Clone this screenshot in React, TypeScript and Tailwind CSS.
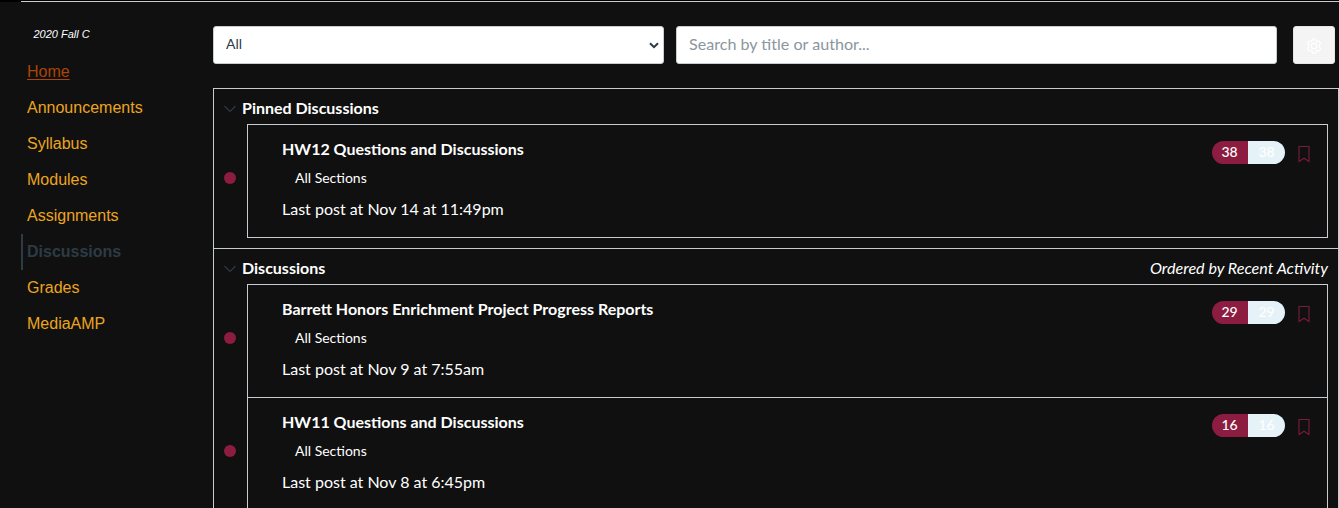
type Topic = { title: string; date: string; unread: number; total: number };

const navItems = ['Home', 'Announcements', 'Syllabus', 'Modules', 'Assignments', 'Discussions', 'Grades', 'MediaAMP'];

const pinned: Topic[] = [
  { title: 'HW12 Questions and Discussions', date: 'Last post at Nov 14 at 11:49pm', unread: 38, total: 38 },
];

const recent: Topic[] = [
  { title: 'Barrett Honors Enrichment Project Progress Reports', date: 'Last post at Nov 9 at 7:55am', unread: 29, total: 29 },
  { title: 'HW11 Questions and Discussions', date: 'Last post at Nov 8 at 6:45pm', unread: 16, total: 16 },
];

function navClass(name: string) {
  const base = 'flex h-9 items-center border-l-2 pl-1 text-[16px] leading-none';
  if (name === 'Home') return `${base} border-transparent text-[#ab4405] underline underline-offset-2`;
  if (name === 'Discussions') return `${base} border-[#2d3b45] font-bold text-[#2d3b45]`;
  return `${base} border-transparent text-[#eba51f]`;
}

function TopicRow({ topic }: { topic: Topic }) {
  return (
    <li className="flex h-[113px]">
      <div className="flex w-[33px] shrink-0 items-center pb-[5px] pl-2.5">
        <span className="size-3 rounded-full bg-[#8c1d40]" />
      </div>
      <div className="mr-2.5 flex grow border-x border-t border-[#c7cdd1] pl-[34px]">
        <div className="grow pt-3">
          <h3 className="text-[16px] leading-6 font-bold">{topic.title}</h3>
          <p className="mt-[6px] pl-[13px] text-[14px] leading-[21px]">All Sections</p>
          <p className="mt-[9px] text-[16px] leading-6">{topic.date}</p>
        </div>
        <div className="mt-4 flex h-[23px] w-[73px] overflow-hidden rounded-full text-[14px] leading-[22px] font-medium">
          <span className="w-9 bg-[#8c1d40] pr-px text-center text-white">{topic.unread}</span>
          <span className="grow bg-[#e5f2f8] text-center text-white">{topic.total}</span>
        </div>
        <svg className="mt-[20px] mr-4 ml-3 h-[18px] w-[14px] shrink-0" viewBox="0 0 14 18" fill="none" stroke="#7b1c3a" strokeWidth="1.1">
          <path d="M2 1.5H12V16.5L7 13.2L2 16.5Z" />
        </svg>
      </div>
    </li>
  );
}

function Section({ title, note, topics }: { title: string; note?: string; topics: Topic[] }) {
  return (
    <section className="border-x border-t border-[#c7cdd1] pb-2.5">
      <header className="flex h-[35px] items-center pr-2.5 pl-2.5 text-[16px] leading-6">
        <svg className="mt-[5px] mr-[6px] h-2 w-3" viewBox="0 0 12 8" fill="none" stroke="#2d3b45" strokeWidth="1.1">
          <path d="M.5 1L6 6.5L11.5 1" />
        </svg>
        <h2 className="grow pt-[3px] font-bold">{title}</h2>
        {note && <em className="pt-[3px] text-[16.1px]">{note}</em>}
      </header>
      <ul>
        {topics.map((topic) => (
          <TopicRow key={topic.title} topic={topic} />
        ))}
      </ul>
      <div className="mr-2.5 ml-[33px] h-px bg-[#c7cdd1]" />
    </section>
  );
}

export default function App() {
  return (
    <div className="flex h-[508px] flex-col overflow-hidden bg-[#101010] font-['Lato',sans-serif] text-white">
      <div className="h-0.5 shrink-0 border-t border-black bg-black pl-[21px]">
        <div className="h-px bg-[#c7cdd1]" />
      </div>
      <div className="flex min-h-0 grow">
        <nav className="w-[213px] shrink-0 pt-6 pl-[21px] font-['Liberation_Sans',Arial,sans-serif]">
          <p className="mb-3 pl-[12.5px] text-[11px] leading-4 italic">2020 Fall C</p>
          {navItems.map((name) => (
            <a key={name} href="#" className={navClass(name)}>
              {name}
            </a>
          ))}
        </nav>
        <main className="min-w-0 grow pt-6">
          <div className="flex h-[38px]">
            <div className="mr-3 flex w-[451px] shrink-0 items-center justify-between rounded-[3px] border border-[#c7cdd1] bg-white pr-1 pl-3 text-[14px] text-[#2d3b45]">
              <span className="pb-[3px]">All</span>
              <svg className="h-[7px] w-2.5" viewBox="0 0 10 7" fill="none" stroke="#2d3b45" strokeWidth="2">
                <path d="M1 1.2L5 5.2L9 1.2" />
              </svg>
            </div>
            <input
              className="mr-4 w-[601px] rounded-[3px] border border-[#c7cdd1] bg-white px-3 pb-px text-[16.1px] placeholder:text-[#8b969e]"
              placeholder="Search by title or author..."
            />
            <button className="flex w-[42px] items-center justify-center rounded-[3px] border border-[#e3e5e6] bg-[#f4f4f4] pt-0.5">
              <svg className="size-4" viewBox="0 0 16 16" fill="none" stroke="white" strokeWidth="1.1" strokeLinejoin="round">
                <path d="M6.6.8H9.4L9.9 2.8L11.3 3.6L13.3 3L14.7 5.4L13.3 6.9V9.1L14.7 10.6L13.3 13L11.3 12.4L9.9 13.2L9.4 15.2H6.6L6.1 13.2L4.7 12.4L2.7 13L1.3 10.6L2.7 9.1V6.9L1.3 5.4L2.7 3L4.7 3.6L6.1 2.8Z" />
                <circle cx="8" cy="8" r="2.8" />
              </svg>
            </button>
          </div>
          <div className="mt-6">
            <Section title="Pinned Discussions" topics={pinned} />
            <Section title="Discussions" note="Ordered by Recent Activity" topics={recent} />
          </div>
        </main>
      </div>
    </div>
  );
}
